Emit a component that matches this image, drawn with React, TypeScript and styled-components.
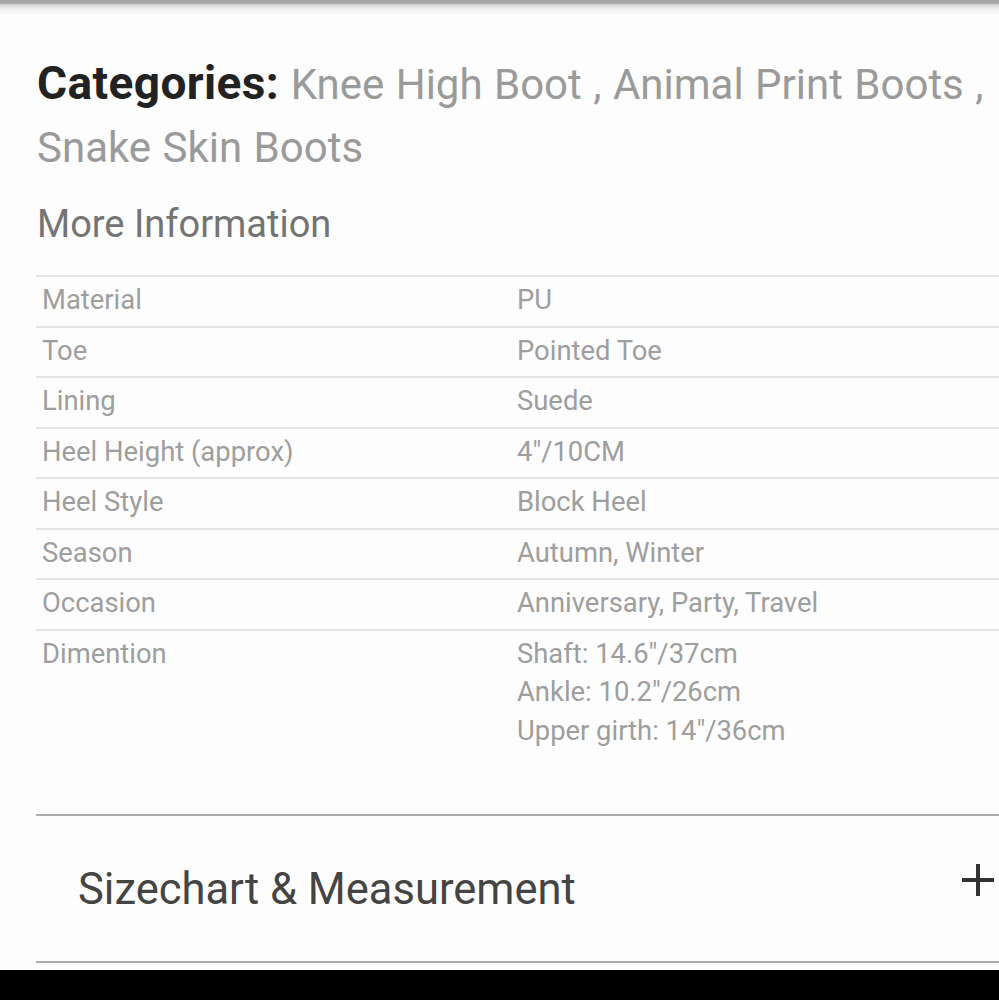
import React from "react";
import styled, { createGlobalStyle } from "styled-components";

const specs: { label: string; value: string[] }[] = [
  { label: "Material", value: ["PU"] },
  { label: "Toe", value: ["Pointed Toe"] },
  { label: "Lining", value: ["Suede"] },
  { label: "Heel Height (approx)", value: ['4"/10CM'] },
  { label: "Heel Style", value: ["Block Heel"] },
  { label: "Season", value: ["Autumn, Winter"] },
  { label: "Occasion", value: ["Anniversary, Party, Travel"] },
  {
    label: "Dimention",
    value: ['Shaft: 14.6"/37cm', 'Ankle: 10.2"/26cm', 'Upper girth: 14"/36cm'],
  },
];

const App: React.FC = () => {
  return (
    <>
      <GlobalStyle />
      <Screen>
        <TopShadow />
        <Content>
          <Categories>
            <strong>Categories:</strong> Knee High Boot , Animal Print Boots ,
            Snake Skin Boots
          </Categories>
          <SectionTitle>More Information</SectionTitle>
          <SpecTable>
            {specs.map((s) => (
              <SpecRow key={s.label}>
                <Cell>{s.label}</Cell>
                <Cell>
                  {s.value.map((v) => (
                    <div key={v}>{v}</div>
                  ))}
                </Cell>
              </SpecRow>
            ))}
          </SpecTable>
          <Accordion>
            <AccordionTitle>Sizechart &amp; Measurement</AccordionTitle>
            <PlusIcon viewBox="0 0 34 34">
              <path d="M17 1v32M1 17h32" stroke="#333" strokeWidth="4" />
            </PlusIcon>
          </Accordion>
        </Content>
        <BottomBar />
      </Screen>
    </>
  );
};

const GlobalStyle = createGlobalStyle`
  html, body {
    margin: 0;
    padding: 0;
    background: #ffffff;
  }
  body {
    font-family: Roboto, "Liberation Sans", sans-serif;
    overflow: hidden;
  }
`;

const Screen = styled.div`
  width: 999px;
  height: 1000px;
  display: flex;
  flex-direction: column;
  background: #fdfdfd;
  overflow: hidden;
`;

const TopShadow = styled.div`
  height: 16px;
  flex-shrink: 0;
  background: linear-gradient(
    to bottom,
    #a6a6a6 0px,
    #a6a6a6 3px,
    #d8d8d8 5px,
    #efefef 9px,
    #fdfdfd 16px
  );
`;

const Content = styled.div`
  flex: 1;
  padding: 36px 0 0 37px;
  display: flex;
  flex-direction: column;
`;

const Categories = styled.div`
  font-size: 42px;
  line-height: 63px;
  color: #9a9a9a;
  margin-right: 10px;
  word-spacing: 1px;

  strong {
    color: #222222;
    font-weight: 700;
    font-size: 46px;
    letter-spacing: 0.4px;
  }
`;

const SectionTitle = styled.div`
  margin-top: 22px;
  font-size: 38px;
  line-height: 47px;
  color: #747474;
`;

const SpecTable = styled.div`
  margin-top: 27px;
  margin-left: -1px;
  display: flex;
  flex-direction: column;
`;

const SpecRow = styled.div`
  display: grid;
  grid-template-columns: 475px 1fr;
  padding: 4px 0 6px 6px;
  border-top: 2px solid #e3e3e3;
  font-size: 27.4px;
  line-height: 38.5px;
  color: #9e9e9e;
`;

const Cell = styled.div`
  display: flex;
  flex-direction: column;
  white-space: nowrap;
`;

const Accordion = styled.div`
  margin-top: 58px;
  margin-left: -1px;
  height: 145px;
  display: flex;
  align-items: center;
  justify-content: space-between;
  border-top: 2px solid #acacac;
  border-bottom: 2px solid #acacac;
  padding: 0 4px 0 42px;
`;

const AccordionTitle = styled.div`
  font-size: 43.5px;
  color: #444444;
  margin-top: 2px;
`;

const PlusIcon = styled.svg`
  width: 34px;
  height: 34px;
  margin-bottom: 18px;
`;

const BottomBar = styled.div`
  height: 30px;
  flex-shrink: 0;
  background: #000000;
`;

export default App;
